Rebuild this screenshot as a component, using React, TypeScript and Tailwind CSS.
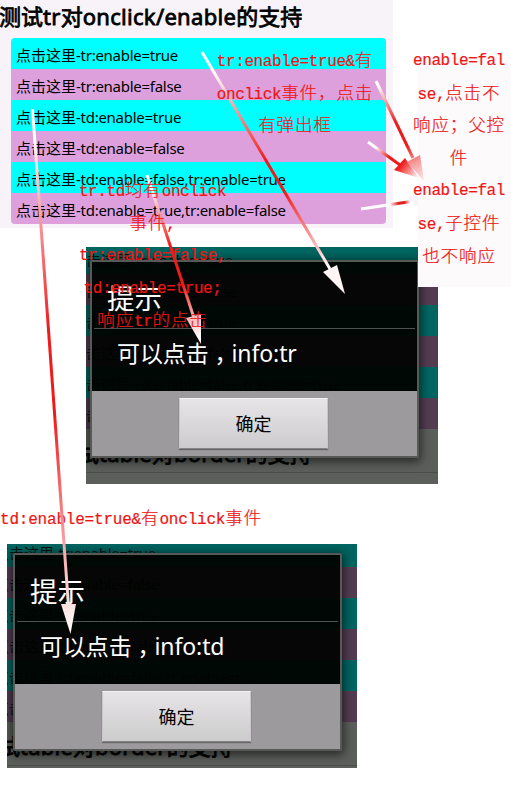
import React from "react";

const rows = [
  "-tr:enable=true",
  "-tr:enable=false",
  "-td:enable=true",
  "-td:enable=false",
  "-td:enable=false,tr:enable=true",
  "-td:enable=true,tr:enable=false",
];

const sans = "font-['Noto_Sans','Noto_Sans_CJK_SC',sans-serif]";
const note =
  "font-['Liberation_Mono','Noto_Sans_CJK_SC',monospace] text-[16px] tracking-[-0.4px] text-[#ee1515] whitespace-nowrap [-webkit-text-stroke:0.2px_#ee1515]";

/* Chinese run inside a red note: full-width cells, twice the Latin advance */
function Zh({ children }: { children: React.ReactNode }) {
  return (
    <span className="text-[17.5px] font-light tracking-[0.9px] [-webkit-text-stroke:0.2px_#ee1515]">
      {children}
    </span>
  );
}

function Line({ children }: { children: React.ReactNode }) {
  return <div className="h-[32.6px] leading-[32.6px]">{children}</div>;
}

function RowText({ text }: { text: string }) {
  return (
    <>
      点击这里<span className="tracking-[-0.27px]">{text}</span>
    </>
  );
}

/* Dimmed page with the native alert on top of it */
function AlertShot({ info, second }: { info: string; second?: boolean }) {
  return (
    <div
      className={
        second
          ? "relative ml-[7px] h-[224px] w-[350px] overflow-hidden bg-[#5b5e5a]"
          : "relative ml-[86px] h-[237px] w-[352px] overflow-hidden bg-[#5b5e5a]"
      }
    >
      <div className={second ? "-mt-[8px]" : "-mt-[4px]"}>
        {rows.map((r, i) => (
          <div
            key={i}
            className={`h-[31px] whitespace-nowrap text-[15px] leading-[35px] text-[#001512] ${
              second ? "-indent-[13px]" : "-indent-[15px]"
            } ${i % 2 ? "bg-[#533c52]" : "bg-[#006561]"}`}
          >
            <RowText text={r} />
          </div>
        ))}
        <div className="h-[44px] -indent-[31px] whitespace-nowrap border-b border-[#4b4e4a] text-[22px] leading-[48px] text-black [-webkit-text-stroke:0.8px_black]">
          测试<span className="tracking-[0.2px]">table</span>对
          <span className="tracking-[0.2px]">border</span>的支持
        </div>
      </div>
      <div
        className={`absolute flex h-[198px] w-[329px] flex-col rounded-[2px] border-2 border-[#575956] shadow-[0_2px_10px_2px_rgba(0,0,0,0.55)] ${
          second ? "left-[6px] top-[9px]" : "left-[4px] top-[13px]"
        }`}
      >
        <div className="h-[129px] bg-[#000200]/94 px-[2px] text-white">
          <div className="h-[67px] border-b border-[#505250] pl-[13px] pt-[3px] text-[27.5px] leading-[68px]">
            提示
          </div>
          <div className="pl-[23px] text-[23px] leading-[49px] tracking-[-0.1px]">
            可以点击<span className="-mr-[6px] pl-[6px]">，</span>info:{info}
          </div>
        </div>
        <div className="flex flex-1 justify-center bg-[#9d9a9d] pt-[7px]">
          <button className="-ml-[2px] h-[51px] w-[149px] border border-[#c8c6c8] border-t-[#f4f2f4] border-b-[#858385] bg-gradient-to-b from-[#e7e4e7] to-[#cdcccd] text-[18px] leading-[48px] text-black shadow-[0_1px_1px_#666]">
            确定
          </button>
        </div>
      </div>
    </div>
  );
}

function Arrows() {
  return (
    <svg className="absolute left-0 top-0" width="511" height="800" viewBox="0 0 511 800">
      <defs>
        <linearGradient id="a1" gradientUnits="userSpaceOnUse" x1="202" y1="52" x2="345" y2="294">
          <stop offset="0.08" stopColor="#fff" />
          <stop offset="0.45" stopColor="#ee1b1b" />
          <stop offset="0.58" stopColor="#ee1b1b" />
          <stop offset="0.88" stopColor="#fff5f5" />
        </linearGradient>
        <linearGradient id="a2" gradientUnits="userSpaceOnUse" x1="32" y1="109" x2="70" y2="634">
          <stop offset="0.05" stopColor="#fff" />
          <stop offset="0.42" stopColor="#ee1b1b" />
          <stop offset="0.58" stopColor="#ee1b1b" />
          <stop offset="0.98" stopColor="#fff5f5" />
        </linearGradient>
        <linearGradient id="a3" gradientUnits="userSpaceOnUse" x1="147" y1="175" x2="201" y2="344">
          <stop offset="0.08" stopColor="#fff" />
          <stop offset="0.42" stopColor="#ee1b1b" />
          <stop offset="0.65" stopColor="#ee1b1b" />
          <stop offset="0.84" stopColor="#f9b4b4" />
          <stop offset="0.96" stopColor="#fff" />
        </linearGradient>
        <linearGradient id="a4" gradientUnits="userSpaceOnUse" x1="376" y1="81" x2="424" y2="180">
          <stop offset="0.05" stopColor="#fff" />
          <stop offset="0.42" stopColor="#ee1b1b" />
          <stop offset="0.65" stopColor="#ee1b1b" />
          <stop offset="0.82" stopColor="#f69a9a" />
          <stop offset="1" stopColor="#fde8ea" />
        </linearGradient>
        <linearGradient id="a5" gradientUnits="userSpaceOnUse" x1="368" y1="142" x2="418" y2="178">
          <stop offset="0.15" stopColor="#fff" />
          <stop offset="0.42" stopColor="#ee1b1b" />
          <stop offset="0.65" stopColor="#ee1b1b" />
          <stop offset="1" stopColor="#fff" />
        </linearGradient>
        <linearGradient id="a6" gradientUnits="userSpaceOnUse" x1="361" y1="209" x2="418" y2="200">
          <stop offset="0.5" stopColor="#fff" />
          <stop offset="0.66" stopColor="#e02020" />
          <stop offset="0.76" stopColor="#e02020" />
          <stop offset="0.86" stopColor="#f8f3f8" />
        </linearGradient>
      </defs>
      <g strokeWidth="3" fill="none">
        <path d="M202 52L330 269" stroke="url(#a1)" />
        <path d="M32.500 109L68.500 606" stroke="url(#a2)" />
        <path d="M147 175L194 318" stroke="url(#a3)" />
        <path d="M368 142L400 165" stroke="url(#a5)" />
        <path d="M361 209L411 201.500" stroke="url(#a6)" />
      </g>
      <path d="M394 170L405 158L419 178Z" fill="url(#a5)" />
      <path d="M376 81L413 158" stroke="url(#a4)" strokeWidth="3" />
      <path d="M407 162L420 155L424 181Z" fill="url(#a4)" />
      <path d="M407 197L418 193V206Z" fill="#f8f3f8" />
      <path d="M323 272L337 265L345 294Z" fill="url(#a1)" />
      <path d="M61 604H76L70.500 634Z" fill="url(#a2)" />
      <path d="M186 318L201 314L201 344Z" fill="url(#a3)" />
    </svg>
  );
}

export default function App() {
  return (
    <main className={`relative h-[800px] w-[511px] overflow-hidden bg-white ${sans}`} lang="zh-CN">
      <section className="h-[228px] w-[393px] bg-[#f8f3f8]">
        <h1 className="-ml-[1px] h-[38px] whitespace-nowrap text-[22px] font-normal leading-[32px] text-black [-webkit-text-stroke:0.8px_black]">
          测试<span className="tracking-[0.3px]">tr</span>对
          <span className="tracking-[0.3px]">onclick/enable</span>的支持
        </h1>
        <div className="ml-[11px] w-[375px] overflow-hidden rounded-[4px]">
          {rows.map((r, i) => (
            <div
              key={i}
              className={`h-[31px] whitespace-nowrap pl-[5px] text-[15px] leading-[35px] text-black ${
                i % 2 ? "bg-[#dda0dd]" : "bg-[#00ffff]"
              }`}
            >
              <RowText text={r} />
            </div>
          ))}
        </div>
      </section>

      <div className="mt-[19px]">
        <AlertShot info="tr" />
      </div>
      <div className={`h-[60px] pt-[19px] ${note}`}>
        <div className="h-[33px] leading-[33px] tracking-[-0.2px]">
          td:enable=true&amp;<Zh>有</Zh>onclick<Zh>事件</Zh>
        </div>
      </div>
      <AlertShot info="td" second />

      <div className="absolute left-[418px] top-[57px] h-[230px] w-[93px] bg-[#fdfafc]" />
      <Arrows />

      <div className={`absolute left-[216px] top-[45px] w-[158px] text-center ${note}`}>
        <Line>
          tr:enable=true&amp;<Zh>有</Zh>
        </Line>
        <Line>
          onclick<Zh>事件，点击</Zh>
        </Line>
        <Line>
          <Zh>有弹出框</Zh>
        </Line>
      </div>

      <div className={`absolute left-[409px] top-[45px] w-[100px] text-center ${note}`}>
        <Line>enable=fal</Line>
        <Line>
          se,<Zh>点击不</Zh>
        </Line>
        <Line>
          <Zh>响应；父控</Zh>
        </Line>
        <Line>
          <Zh>件</Zh>
        </Line>
        <Line>enable=fal</Line>
        <Line>
          se,<Zh>子控件</Zh>
        </Line>
        <Line>
          <Zh>也不响应</Zh>
        </Line>
      </div>

      <div className={`absolute left-[72px] top-[175px] w-[161px] text-center ${note}`}>
        <Line>
          tr.td<Zh>均有</Zh>onclick
        </Line>
        <Line>
          <Zh>事件</Zh>,
        </Line>
        <Line>tr:enable=false,</Line>
        <Line>td:enable=true;</Line>
        <Line>
          <Zh>响应</Zh>tr<Zh>的点击</Zh>
        </Line>
      </div>
    </main>
  );
}
